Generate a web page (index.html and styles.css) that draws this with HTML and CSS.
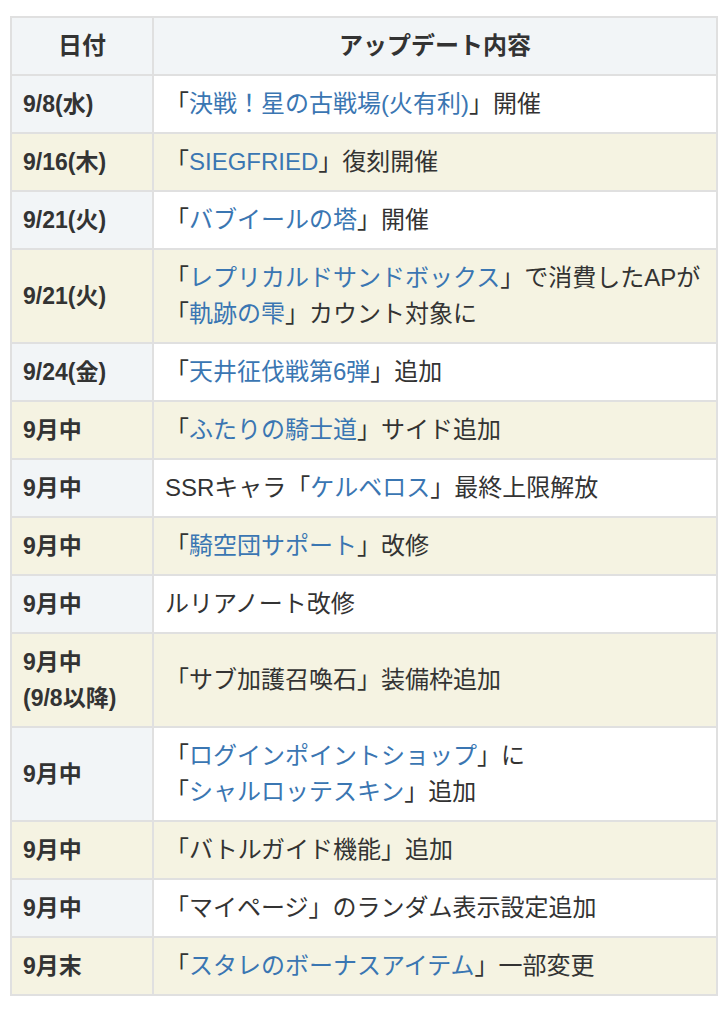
FILE: index.html
```html
<!DOCTYPE html>
<html lang="ja">
<head>
<meta charset="utf-8">
<title>アップデート内容</title>
<link rel="stylesheet" href="styles.css">
</head>
<body>
<table class="updates">
  <thead>
    <tr><th class="date-h">日付</th><th>アップデート内容</th></tr>
  </thead>
  <tbody>
    <tr><td class="date">9/8(水)</td><td>「<a>決戦！星の古戦場(火有利)</a>」開催</td></tr>
    <tr class="alt"><td class="date">9/16(木)</td><td>「<a>SIEGFRIED</a>」復刻開催</td></tr>
    <tr><td class="date">9/21(火)</td><td>「<a>バブイールの塔</a>」開催</td></tr>
    <tr class="alt"><td class="date">9/21(火)</td><td>「<a>レプリカルドサンドボックス</a>」で消費したAPが<br>「<a>軌跡の雫</a>」カウント対象に</td></tr>
    <tr><td class="date">9/24(金)</td><td>「<a>天井征伐戦第6弾</a>」追加</td></tr>
    <tr class="alt"><td class="date">9月中</td><td>「<a>ふたりの騎士道</a>」サイド追加</td></tr>
    <tr><td class="date">9月中</td><td>SSRキャラ「<a>ケルベロス</a>」最終上限解放</td></tr>
    <tr class="alt"><td class="date">9月中</td><td>「<a>騎空団サポート</a>」改修</td></tr>
    <tr><td class="date">9月中</td><td>ルリアノート改修</td></tr>
    <tr class="alt"><td class="date">9月中<br>(9/8以降)</td><td>「サブ加護召喚石」装備枠追加</td></tr>
    <tr><td class="date">9月中</td><td>「<a>ログインポイントショップ</a>」に<br>「<a>シャルロッテスキン</a>」追加</td></tr>
    <tr class="alt"><td class="date">9月中</td><td>「バトルガイド機能」追加</td></tr>
    <tr><td class="date">9月中</td><td>「マイページ」のランダム表示設定追加</td></tr>
    <tr class="alt"><td class="date">9月末</td><td>「<a>スタレのボーナスアイテム</a>」一部変更</td></tr>
  </tbody>
</table>
</body>
</html>
```
FILE: styles.css
```css
html, body {
  margin: 0;
  padding: 0;
  background: #ffffff;
}
body {
  padding: 16px 10px 0 10px;
  font-family: "Liberation Sans", "Noto Sans CJK JP", sans-serif;
  color: #333333;
}
.updates {
  width: 708px;
  border-collapse: collapse;
  font-size: 24px;
  line-height: 36px;
}
.updates th,
.updates td {
  border: 2px solid #e0e0e0;
  padding: 10px 11px;
  text-align: left;
  vertical-align: middle;
  background: #ffffff;
}
.updates th {
  background: #f2f5f7;
  font-weight: bold;
  text-align: center;
}
.updates .date-h {
  width: 118px;
}
.updates td.date {
  background: #f2f5f7;
  font-weight: bold;
  font-size: 23px;
}
.updates tr.alt td,
.updates tr.alt td.date {
  background: #f5f3e2;
}
.updates a {
  color: #3a76b2;
  text-decoration: none;
}
```
